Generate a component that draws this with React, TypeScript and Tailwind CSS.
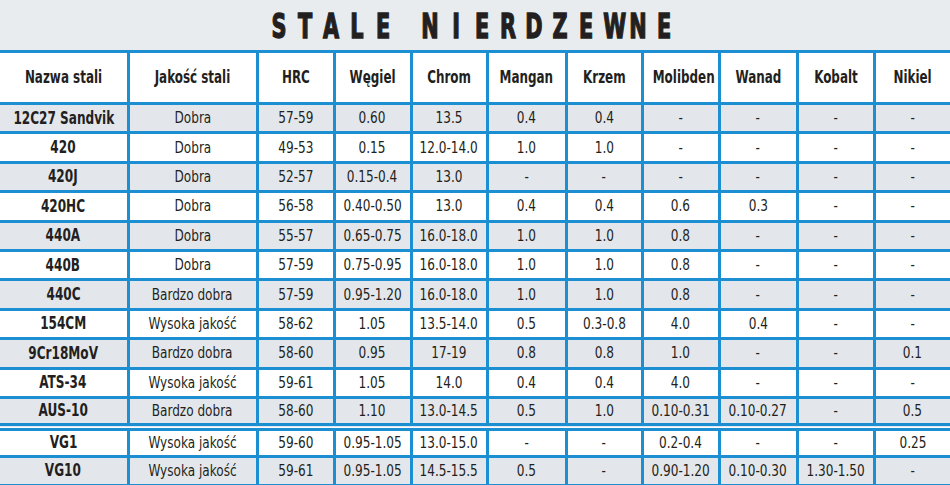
import React from "react";

const cols = [128, 129, 77, 77, 76, 79, 76, 77, 78, 77, 76];

const headers = [
  "Nazwa stali",
  "Jakość stali",
  "HRC",
  "Węgiel",
  "Chrom",
  "Mangan",
  "Krzem",
  "Molibden",
  "Wanad",
  "Kobalt",
  "Nikiel",
];

const rows: string[][] = [
  ["12C27 Sandvik", "Dobra", "57-59", "0.60", "13.5", "0.4", "0.4", "-", "-", "-", "-"],
  ["420", "Dobra", "49-53", "0.15", "12.0-14.0", "1.0", "1.0", "-", "-", "-", "-"],
  ["420J", "Dobra", "52-57", "0.15-0.4", "13.0", "-", "-", "-", "-", "-", "-"],
  ["420HC", "Dobra", "56-58", "0.40-0.50", "13.0", "0.4", "0.4", "0.6", "0.3", "-", "-"],
  ["440A", "Dobra", "55-57", "0.65-0.75", "16.0-18.0", "1.0", "1.0", "0.8", "-", "-", "-"],
  ["440B", "Dobra", "57-59", "0.75-0.95", "16.0-18.0", "1.0", "1.0", "0.8", "-", "-", "-"],
  ["440C", "Bardzo dobra", "57-59", "0.95-1.20", "16.0-18.0", "1.0", "1.0", "0.8", "-", "-", "-"],
  ["154CM", "Wysoka jakość", "58-62", "1.05", "13.5-14.0", "0.5", "0.3-0.8", "4.0", "0.4", "-", "-"],
  ["9Cr18MoV", "Bardzo dobra", "58-60", "0.95", "17-19", "0.8", "0.8", "1.0", "-", "-", "0.1"],
  ["ATS-34", "Wysoka jakość", "59-61", "1.05", "14.0", "0.4", "0.4", "4.0", "-", "-", "-"],
  ["AUS-10", "Bardzo dobra", "58-60", "1.10", "13.0-14.5", "0.5", "1.0", "0.10-0.31", "0.10-0.27", "-", "0.5"],
  ["VG1", "Wysoka jakość", "59-60", "0.95-1.05", "13.0-15.0", "-", "-", "0.2-0.4", "-", "-", "0.25"],
  ["VG10", "Wysoka jakość", "59-61", "0.95-1.05", "14.5-15.5", "0.5", "-", "0.90-1.20", "0.10-0.30", "1.30-1.50", "-"],
];

const title = "STALE NIERDZEWNE".split("");

export default function App() {
  return (
    <div className="h-[485px] w-[950px] overflow-hidden bg-[#e9ecef] font-['DejaVu_Sans_Condensed','DejaVu_Sans',sans-serif] text-[#231f20]">
      {/* title, letter by letter like the printed heading */}
      <div className="flex h-[50px] items-center justify-center pr-[8px] pt-[2px]">
        {title.map((ch, i) =>
          ch === " " ? (
            <span key={i} className="w-[21px]" />
          ) : (
            <span
              key={i}
              className="inline-block w-[26px] scale-x-[0.68] text-center text-[34px] font-bold leading-none [-webkit-text-stroke:1.4px_#231f20]"
            >
              {ch}
            </span>
          )
        )}
      </div>

      <table className="w-[950px] table-fixed border-collapse">
        <colgroup>
          {cols.map((w, i) => (
            <col key={i} style={{ width: w }} />
          ))}
        </colgroup>
        <thead>
          <tr className="h-[52px] bg-white">
            {headers.map((h, i) => (
              <th
                key={h}
                className={`border-[3px] border-[#1b8fd1] p-0 text-center text-[17px] font-bold ${
                  i === 0 ? "border-l-0" : ""
                } ${i === headers.length - 1 ? "border-r-0" : ""}`}
              >
                <span className="inline-block scale-x-[0.78] whitespace-nowrap">{h}</span>
              </th>
            ))}
          </tr>
        </thead>
        <tbody>
          {rows.map((r, ri) => (
            <tr
              key={r[0]}
              className={`h-[29.4px] ${ri % 2 === 0 ? "bg-[#e3e7ec]" : "bg-white"}`}
            >
              {r.map((c, ci) => (
                <td
                  key={ci}
                  className={`border-[3px] border-[#1b8fd1] p-0 text-center leading-none ${
                    ci === 0 ? "border-l-0 text-[17px] font-bold" : "text-[16px]"
                  } ${ci === r.length - 1 ? "border-r-0" : ""} ${
                    r[0] === "VG1" ? "border-t-[8px] border-t-[#1b8fd1] [border-top-style:double]" : ""
                  }`}
                >
                  <span
                    className={`inline-block whitespace-nowrap ${
                      ci === 0 ? "scale-x-[0.79]" : "scale-x-[0.84]"
                    }`}
                  >
                    {c}
                  </span>
                </td>
              ))}
            </tr>
          ))}
        </tbody>
      </table>
    </div>
  );
}
